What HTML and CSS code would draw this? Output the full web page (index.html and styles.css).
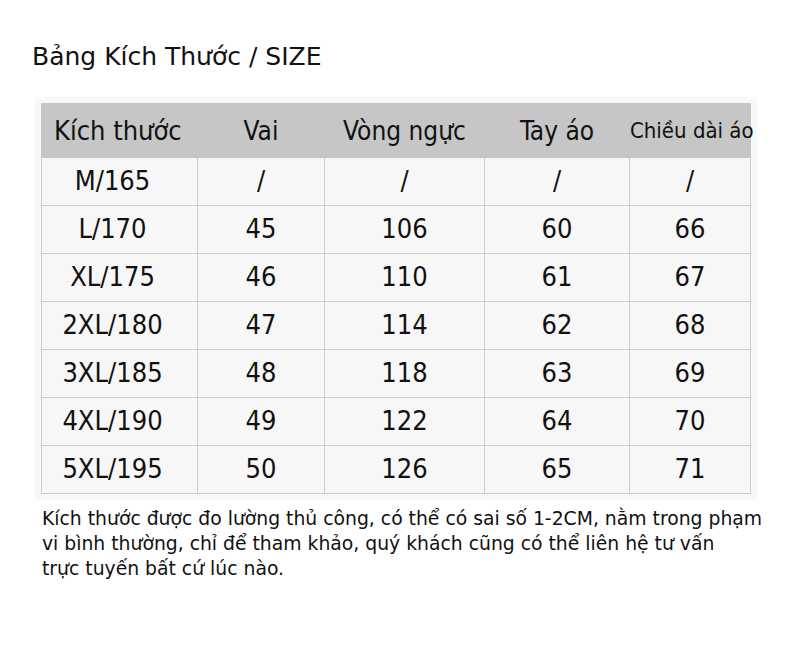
FILE: index.html
```html
<!DOCTYPE html>
<html lang="vi">
<head>
<meta charset="utf-8">
<link rel="stylesheet" href="styles.css">
</head>
<body>
<div class="page">
  <h1 class="title">Bảng Kích Thước / SIZE</h1>
  <div class="table-box">
    <table class="size-table">
      <colgroup>
        <col class="c1"><col class="c2"><col class="c3"><col class="c4"><col class="c5">
      </colgroup>
      <thead>
        <tr>
          <th>Kích thước</th>
          <th>Vai</th>
          <th>Vòng ngực</th>
          <th>Tay áo</th>
          <th class="small">Chiều dài áo</th>
        </tr>
      </thead>
      <tbody>
        <tr><td>M/165</td><td>/</td><td>/</td><td>/</td><td>/</td></tr>
        <tr><td>L/170</td><td>45</td><td>106</td><td>60</td><td>66</td></tr>
        <tr><td>XL/175</td><td>46</td><td>110</td><td>61</td><td>67</td></tr>
        <tr><td>2XL/180</td><td>47</td><td>114</td><td>62</td><td>68</td></tr>
        <tr><td>3XL/185</td><td>48</td><td>118</td><td>63</td><td>69</td></tr>
        <tr><td>4XL/190</td><td>49</td><td>122</td><td>64</td><td>70</td></tr>
        <tr><td>5XL/195</td><td>50</td><td>126</td><td>65</td><td>71</td></tr>
      </tbody>
    </table>
  </div>
  <p class="note">Kích thước được đo lường thủ công, có thể có sai số 1-2CM, nằm trong phạm<br>vi bình thường, chỉ để tham khảo, quý khách cũng có thể liên hệ tư vấn<br>trực tuyến bất cứ lúc nào.</p>
</div>
</body>
</html>
```

FILE: styles.css
```css
html, body {
  margin: 0;
  padding: 0;
  background: #ffffff;
}
.page {
  width: 790px;
  height: 665px;
  box-sizing: border-box;
  padding-top: 39px;
  font-family: "DejaVu Sans Condensed", "DejaVu Sans", sans-serif;
  color: #111111;
}
.title {
  margin: 0 0 0 32px;
  font-size: 25px;
  font-weight: normal;
  line-height: 36px;
  font-family: "DejaVu Sans", sans-serif;
}
.table-box {
  margin: 22px 0 0 35px;
  width: 722px;
  padding: 6px 0 6px 6px;
  box-sizing: border-box;
  background: #f8f8f8;
}
.size-table {
  border-collapse: collapse;
  table-layout: fixed;
  width: 709px;
}
.c1 { width: 156px; }
.c2 { width: 127px; }
.c3 { width: 160px; }
.c4 { width: 145px; }
.c5 { width: 121px; }
.size-table th {
  background: #c6c6c6;
  height: 53px;
  padding: 0;
  font-weight: normal;
  font-size: 26px;
  text-align: center;
  border: 1px solid #c6c6c6;
  white-space: nowrap;
}
.size-table th:first-child {
  text-align: left;
  padding-left: 12px;
  font-size: 27px;
}
.size-table th.small {
  font-size: 22px;
  text-align: right;
  padding-right: 0;
}
.size-table td {
  background: #f7f7f7;
  height: 45px;
  padding: 0 0 2px 0;
  font-size: 27px;
  text-align: center;
  border: 1px solid #cdcdcd;
  line-height: 30px;
}
.size-table td:first-child {
  padding-right: 14px;
}
.note {
  margin: 6px 0 0 42px;
  width: 745px;
  font-size: 18.8px;
  line-height: 25px;
  font-family: "DejaVu Sans", sans-serif;
  white-space: nowrap;
}
```
